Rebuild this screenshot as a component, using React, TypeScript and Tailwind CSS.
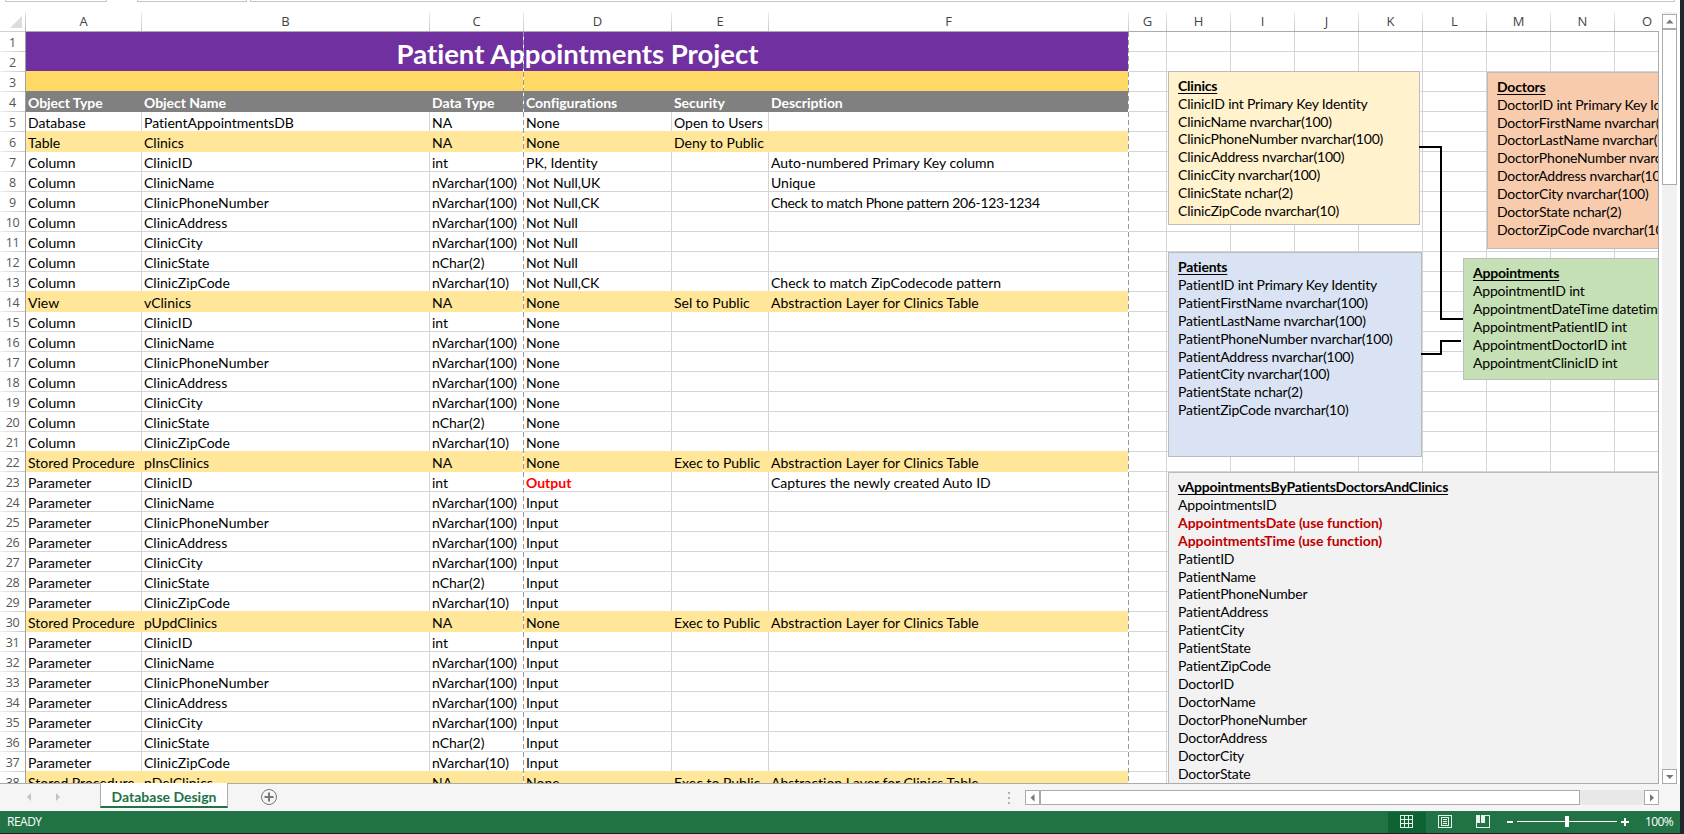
import React from "react";

type Row = { n: number; cells: string[]; kind: "gold" | "head" | "plain" | "band" };

const clinicColumns: [string, string][] = [
  ["ClinicID", "int"],
  ["ClinicName", "nVarchar(100)"],
  ["ClinicPhoneNumber", "nVarchar(100)"],
  ["ClinicAddress", "nVarchar(100)"],
  ["ClinicCity", "nVarchar(100)"],
  ["ClinicState", "nChar(2)"],
  ["ClinicZipCode", "nVarchar(10)"],
];

const group = (type: string, configs: string[], notes: string[] = []): string[][] =>
  clinicColumns.map(([name, dataType], i) => [type, name, dataType, configs[i] ?? configs[0], "", notes[i] ?? ""]);

const body: string[][] = [
  ["Database", "PatientAppointmentsDB", "NA", "None", "Open to Users", ""],
  ["Table", "Clinics", "NA", "None", "Deny to Public", ""],
  ...group(
    "Column",
    ["PK, Identity", "Not Null,UK", "Not Null,CK", "Not Null", "Not Null", "Not Null", "Not Null,CK"],
    ["Auto-numbered Primary Key column", "Unique", "Check to match Phone pattern 206-123-1234", "", "", "", "Check to match ZipCodecode pattern"]
  ),
  ["View", "vClinics", "NA", "None", "Sel to Public", "Abstraction Layer for Clinics Table"],
  ...group("Column", ["None"]),
  ["Stored Procedure", "pInsClinics", "NA", "None", "Exec to Public", "Abstraction Layer for Clinics Table"],
  ...group("Parameter", ["Output", "Input", "Input", "Input", "Input", "Input", "Input"], ["Captures the newly created Auto ID"]),
  ["Stored Procedure", "pUpdClinics", "NA", "None", "Exec to Public", "Abstraction Layer for Clinics Table"],
  ...group("Parameter", ["Input"]),
  ["Stored Procedure", "pDelClinics", "NA", "None", "Exec to Public", "Abstraction Layer for Clinics Table"],
];

const bandTypes = ["Table", "View", "Stored Procedure"];

const rows: Row[] = [
  { n: 3, cells: [], kind: "gold" },
  { n: 4, cells: ["Object Type", "Object Name", "Data Type", "Configurations", "Security", "Description"], kind: "head" },
  ...body.map((cells, i): Row => ({ n: i + 5, cells, kind: bandTypes.includes(cells[0]) ? "band" : "plain" })),
];

const mainWidths = ["w-[116px]", "w-[288px]", "w-[94px]", "w-[148px]", "w-[97px]", "w-[360px]"];
const sideWidths = ["w-[38px]", "w-16", "w-16", "w-16", "w-16", "w-16", "w-16", "w-16", "w-[44px]"];
const allWidths = [...mainWidths, ...sideWidths];
const letters = "ABCDEFGHIJKLMNO".split("");

function SideCells() {
  return (
    <>
      {sideWidths.map((w, i) => (
        <div key={i} className={`${w} h-5 shrink-0 border-b border-[#d4d4d4] ${i < 8 ? "border-r" : ""}`} />
      ))}
    </>
  );
}

const kindStyle: Record<string, string> = {
  gold: "bg-[#ffd966] shadow-[0_-1px_0_#ffd966]",
  head: "bg-[#808080] shadow-[0_-1px_0_#808080] text-white font-bold tracking-[-0.05px]",
  band: "bg-[#ffe699] shadow-[0_-1px_0_#ffe699]",
};

function tracking(text: string) {
  if (text.includes("206-")) return "tracking-[-0.35px]";
  if (text.includes("(10")) return "tracking-[-0.04px]";
  if (text === "ClinicPhoneNumber") return "tracking-[0.1px]";
  return "";
}

function SheetRow({ row }: { row: Row }) {
  const plain = row.kind === "plain";
  return (
    <div className="flex h-5 shrink-0">
      <div className={`relative flex w-[1103px] shrink-0 ${plain ? "" : kindStyle[row.kind]}`}>
        {mainWidths.map((w, i) => (
          <div
            key={i}
            className={`${w} h-5 shrink-0 overflow-visible whitespace-pre pl-[2px] text-[14px] leading-[21px] ${
              plain ? "border-b border-r border-[#d4d4d4]" : ""
            } ${row.cells[i] === "Output" ? "font-bold text-[#ff0000]" : ""} ${tracking(row.cells[i] ?? "")}`}
          >
            {row.cells[i] ?? ""}
          </div>
        ))}
      </div>
      <SideCells />
    </div>
  );
}

function Shape({ className, title, lines }: { className: string; title: string; lines: string[] }) {
  return (
    <div className={`absolute border border-[#bcbcbc] pl-[9px] text-[14px] leading-[17.9px] tracking-[-0.2px] ${className}`}>
      <div className="whitespace-nowrap font-bold underline decoration-1 underline-offset-2">{title}</div>
      {lines.map((l) => (
        <div
          key={l}
          className={`whitespace-nowrap ${l.includes("use function") ? "font-bold tracking-[-0.06px] text-[#c00000]" : ""}`}
        >
          {l}
        </div>
      ))}
    </div>
  );
}

function Arrow({ d }: { d: string }) {
  return (
    <svg width="13" height="13" viewBox="0 0 13 13">
      <path d={d} fill="#777" />
    </svg>
  );
}

const dash =
  "absolute top-0 h-full w-px bg-white bg-[repeating-linear-gradient(to_bottom,#999_0,#999_5px,#fff_5px,#fff_8px)]";

export default function App() {
  return (
    <div className="flex h-[834px] w-[1684px] overflow-hidden bg-[#1d262b] font-['Lato','Liberation_Sans',sans-serif] text-black [font-variant-ligatures:none]">
      <div className="flex w-[1680px] shrink-0 flex-col">
        <div className="flex h-3 shrink-0 bg-white pl-[5px]">
          <div className="h-0.5 w-[102px] border-x border-b border-[#c6c6c6]" />
          <div className="ml-[30px] h-0.5 w-[110px] border-x border-b border-[#c6c6c6]" />
          <div className="ml-[3px] h-0.5 w-[1425px] border-x border-b border-[#c6c6c6]" />
        </div>

        <div className="flex h-[772px] shrink-0 bg-white">
          <div className="flex w-[1659px] shrink-0 flex-col">
            <div className="flex h-5 shrink-0 font-['Open_Sans','Noto_Sans',sans-serif] text-[13px] text-[#444]">
              <div className="flex w-[26px] shrink-0 border-b border-[#d0d0d0]">
                <svg width="25" height="19" className="shrink-0">
                  <path d="M22 4V16H10Z" fill="#dcdcdc" />
                </svg>
                <div className="h-5 w-px bg-linear-to-b from-[#e8e8e8] to-[#ababab]" />
              </div>
              <div className="flex w-[1633px] overflow-hidden border-b border-[#ababab]">
                {letters.map((l, i) => (
                  <div key={l} className={`${allWidths[i]} flex shrink-0`}>
                    <div className={`grow text-center leading-[19px] ${l === "O" ? "pl-5" : ""}`}>{l}</div>
                    {l !== "O" && <div className="h-5 w-px bg-linear-to-b from-[#ececec] to-[#c8c8c8]" />}
                  </div>
                ))}
              </div>
            </div>

            <div className="flex h-[752px] shrink-0 overflow-hidden border-b border-[#ababab]">
              <div className="flex w-[26px] shrink-0 flex-col border-r border-[#a0a0a0]">
                {Array.from({ length: 38 }, (_, i) => (
                  <div
                    key={i}
                    className="flex h-5 shrink-0 flex-col font-['Open_Sans','Noto_Sans',sans-serif] text-[12.500px] tracking-[-0.3px] text-[#555]"
                  >
                    <div className="h-[19px] text-center leading-[21px]">{i + 1}</div>
                    <div className="h-px bg-linear-to-r from-[#eee] to-[#c8c8c8]" />
                  </div>
                ))}
              </div>

              <div className="relative flex w-[1633px] shrink-0 flex-col overflow-hidden border-r border-[#ababab]">
                <div className="flex h-10 shrink-0">
                  <div className="flex w-[1103px] shrink-0 justify-center bg-[#7030a0] pt-1 text-[27.500px] font-bold leading-[36px] text-white">
                    Patient Appointments Project
                  </div>
                  <div>
                    <div className="flex"><SideCells /></div>
                    <div className="flex"><SideCells /></div>
                  </div>
                </div>
                {rows.map((r) => (
                  <SheetRow key={r.n} row={r} />
                ))}

                <div className={`${dash} left-[497px]`} />
                <div className={`${dash} left-[1102px]`} />

                <Shape
                  className="left-[1142px] top-[39px] h-[154px] w-[252px] bg-[#fff2cc] pt-[4.700px]"
                  title="Clinics"
                  lines={["ClinicID int Primary Key Identity", "ClinicName nvarchar(100)", "ClinicPhoneNumber nvarchar(100)", "ClinicAddress nvarchar(100)", "ClinicCity nvarchar(100)", "ClinicState nchar(2)", "ClinicZipCode nvarchar(10)"]}
                />
                <Shape
                  className="left-[1461px] top-[40px] h-[177px] w-[252px] bg-[#f8cbad] pt-[4.700px]"
                  title="Doctors"
                  lines={["DoctorID int Primary Key Identity", "DoctorFirstName nvarchar(100)", "DoctorLastName nvarchar(100)", "DoctorPhoneNumber nvarchar(100)", "DoctorAddress nvarchar(100)", "DoctorCity nvarchar(100)", "DoctorState nchar(2)", "DoctorZipCode nvarchar(10)"]}
                />
                <Shape
                  className="left-[1142px] top-[220px] h-[205px] w-[254px] bg-[#dae3f3] pt-[5px]"
                  title="Patients"
                  lines={["PatientID int Primary Key Identity", "PatientFirstName nvarchar(100)", "PatientLastName nvarchar(100)", "PatientPhoneNumber nvarchar(100)", "PatientAddress nvarchar(100)", "PatientCity nvarchar(100)", "PatientState nchar(2)", "PatientZipCode nvarchar(10)"]}
                />
                <svg className="absolute left-[1390px] top-[100px]" width="60" height="230" fill="none" stroke="#000" strokeWidth="2">
                  <path d="M3 15H25V187H48" />
                  <path d="M5 222H25V209H45" />
                </svg>
                <Shape
                  className="left-[1437px] top-[226px] h-[122px] w-[252px] bg-[#c5e0b4] pt-[5px]"
                  title="Appointments"
                  lines={["AppointmentID int", "AppointmentDateTime datetime", "AppointmentPatientID int", "AppointmentDoctorID int", "AppointmentClinicID int"]}
                />
                <Shape
                  className="left-[1142px] top-[440px] h-[400px] w-[560px] bg-[#f2f2f2] pt-[5px]"
                  title="vAppointmentsByPatientsDoctorsAndClinics"
                  lines={["AppointmentsID", "AppointmentsDate (use function)", "AppointmentsTime (use function)", "PatientID", "PatientName", "PatientPhoneNumber", "PatientAddress", "PatientCity", "PatientState", "PatientZipCode", "DoctorID", "DoctorName", "DoctorPhoneNumber", "DoctorAddress", "DoctorCity", "DoctorState"]}
                />
              </div>
            </div>
          </div>

          <div className="ml-[3px] flex w-[15px] flex-col bg-[#f1f1f1] pt-0.5">
            <div className="h-[15px] shrink-0 border border-[#ababab] bg-white">
              <Arrow d="M3 8.500H10.500L6.800 4.500Z" />
            </div>
            <div className="h-[156px] shrink-0 border border-[#ababab] bg-white" />
            <div className="mt-auto h-[15px] shrink-0 border border-[#ababab] bg-white">
              <Arrow d="M3 5H10.500L6.800 9Z" />
            </div>
          </div>
        </div>

        <div className="flex h-[27px] shrink-0 bg-[#f5f5f5]">
          <div className="flex w-[100px] shrink-0">
            <svg width="100" height="26">
              <path d="M31 9V17L27 13Z M56 9V17L60 13Z" fill="#c3c3c3" />
            </svg>
          </div>
          <div className="-mt-px h-[25px] w-32 shrink-0 border-x border-b-2 border-x-[#ababab] border-b-[#217346] bg-white text-center text-[14px] font-bold leading-[27px] text-[#217346]">
            Database Design
          </div>
          <svg width="40" height="26" className="ml-[21px] shrink-0" fill="none" stroke="#777">
            <circle cx="20" cy="13" r="7.500" />
            <path d="M15.500 13H24.500M20 8.500V17.500" strokeWidth="2" />
          </svg>
          <div className="ml-[719px] flex w-[17px] shrink-0 flex-col gap-[3px] pt-2">
            <div className="h-0.5 w-0.5 bg-[#b0b0b0]" />
            <div className="h-0.5 w-0.5 bg-[#b0b0b0]" />
            <div className="h-0.5 w-0.5 bg-[#b0b0b0]" />
          </div>
          <div className="mt-1.5 flex h-[15px] w-[634px] bg-[#e8e8e8]">
            <div className="w-[15px] border border-[#ababab] bg-white">
              <Arrow d="M8.500 3V10.500L4.500 6.800Z" />
            </div>
            <div className="w-[540px] border border-[#ababab] bg-white" />
            <div className="ml-auto w-[15px] border border-[#ababab] bg-white">
              <Arrow d="M5 3V10.500L9 6.800Z" />
            </div>
          </div>
        </div>

        <div className="flex h-[22px] shrink-0 bg-[#217346] font-['Open_Sans','Noto_Sans',sans-serif] text-[12px] leading-[22px] text-white">
          <div className="w-[1388px] shrink-0 pl-[7px] text-[12px] tracking-[-0.5px]">READY</div>
          <svg width="250" height="22" className="shrink-0" shapeRendering="crispEdges">
            <rect x="0" y="1" width="38" height="21" fill="#0e6335" />
            <path d="M12.500 4.500H24.500V16.500H12.500ZM16.500 4V17M20.500 4V17M12 8.500H25M12 12.500H25" fill="none" stroke="#e8f3ec" />
            <path d="M50.500 4.500H63.500V16.500H50.500ZM53.500 6.500H60.500V14.500H53.500ZM55 8.500H59M55 10.500H59M55 12.500H59" fill="none" stroke="#e8f3ec" />
            <path d="M88 4H92V12H88ZM93 4H97V12H93Z" fill="#e8f3ec" />
            <path d="M97 4.500H101.500V16.500H88.500V12" fill="none" stroke="#e8f3ec" />
            <path d="M119 10H125V12H119ZM129 10H229V11H129ZM177 5H181V16H177ZM233 10H241V12H233ZM236 7H238V15H236Z" fill="#fff" />
          </svg>
          <div className="pl-[7px] text-[12px] tracking-[-0.6px]">100%</div>
        </div>
        <div className="h-px bg-[#1d1d1d]" />
      </div>
    </div>
  );
}
